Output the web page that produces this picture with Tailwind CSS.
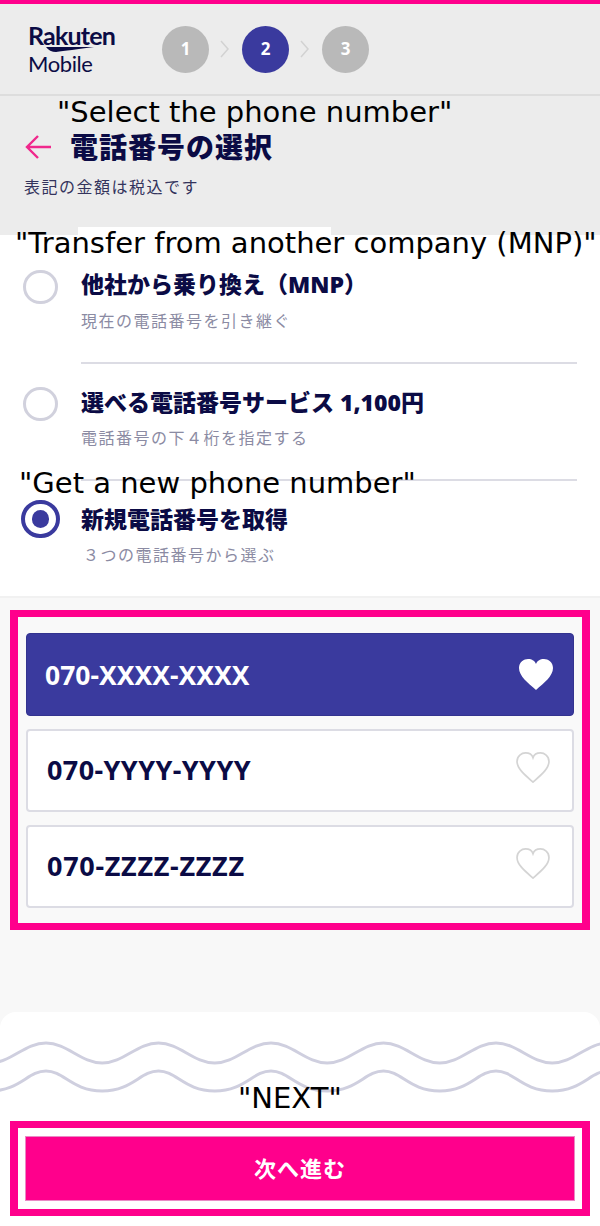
<!DOCTYPE html>
<html lang="ja"><head><meta charset="utf-8"><script src="https://cdn.jsdelivr.net/npm/@tailwindcss/browser@4"></script></head>
<body class="bg-[#f8f8f8]">
<div class="relative w-[600px] h-[1226px] overflow-hidden font-['Noto_Sans','Noto_Sans_CJK_JP',sans-serif] text-[#0b0b45]">
  <div class="h-[4px] bg-[#ff008c]"></div>
  <header class="h-[92px] bg-[#ececec] border-b-2 border-[#dddddd] flex items-center pl-[28px]">
    <div class="w-[134px] flex flex-col">
      <span class="font-['Lato',sans-serif] font-bold text-[25px] leading-[24px] tracking-[-0.8px]">Rakuten</span>
      <svg class="w-[86px] h-[6px]" viewBox="0 0 86 6"><path d="M18 0 H66 C50 2 36 4 28 5 C24 5 20 3 18 0Z" fill="#0b0b45"/></svg>
      <span class="font-['Lato',sans-serif] font-normal text-[22px] leading-[22px] tracking-[-0.4px]">Mobile</span>
    </div>
    <div class="flex items-center">
      <div class="w-[47px] h-[47px] rounded-full bg-[#b9b9b9] text-white font-bold text-[17px] flex items-center justify-center">1</div>
      <svg class="w-[33px] h-[20px]" viewBox="0 0 33 20" fill="none" stroke="#d2d2d2" stroke-width="1.5"><path d="M12 2 L19 10 L12 18"/></svg>
      <div class="w-[47px] h-[47px] rounded-full bg-[#3a3a9e] text-white font-bold text-[17px] flex items-center justify-center">2</div>
      <svg class="w-[33px] h-[20px]" viewBox="0 0 33 20" fill="none" stroke="#d2d2d2" stroke-width="1.5"><path d="M12 2 L19 10 L12 18"/></svg>
      <div class="w-[47px] h-[47px] rounded-full bg-[#b9b9b9] text-white font-bold text-[17px] flex items-center justify-center">3</div>
    </div>
  </header>
  <section class="h-[139px] bg-[#ececec] pl-[24px] pt-[32px]">
    <div class="flex items-center h-[38px]">
      <svg class="w-[28px] h-[26px] shrink-0" viewBox="0 0 28 26" fill="none" stroke="#f0288c" stroke-width="2.4"><path d="M14 2 L3 13 L14 24 M3 13 H27"/></svg>
      <h1 class="ml-[18px] text-[28px] leading-[38px] font-black tracking-[1px]">電話番号の選択</h1>
    </div>
    <p class="mt-[9px] text-[16px] leading-[24px] text-[#33335c] tracking-[1.5px]">表記の金額は税込です</p>
  </section>
  <section class="h-[363px] bg-white pt-[35px] pl-[23px] border-b-2 border-[#f1f1f1]">
    <div class="flex">
      <div class="w-[35px] h-[34px] rounded-full border-[3px] border-[#d1d1dd] bg-white shrink-0"></div>
      <div class="ml-[23px] w-[496px] h-[94px] border-b-2 border-[#dcdce4]">
        <p class="text-[23px] leading-[32px] font-black -mt-[2px]">他社から乗り換え（MNP）</p>
        <p class="mt-[9px] text-[16px] leading-[24px] text-[#8b8ba3] tracking-[1.5px]">現在の電話番号を引き継ぐ</p>
      </div>
    </div>
    <div class="flex mt-[23px]">
      <div class="w-[35px] h-[34px] rounded-full border-[3px] border-[#d1d1dd] bg-white shrink-0"></div>
      <div class="ml-[23px] w-[496px] h-[94px] border-b-2 border-[#dcdce4]">
        <p class="text-[23px] leading-[32px] font-black -mt-[1px]">選べる電話番号サービス 1,100円</p>
        <p class="mt-[8px] text-[16px] leading-[24px] text-[#8b8ba3] tracking-[1.5px]">電話番号の下４桁を指定する</p>
      </div>
    </div>
    <div class="flex mt-[19px] -ml-[2px]">
      <div class="w-[39px] h-[38px] rounded-full border-[4px] border-[#3a3a9e] bg-white shrink-0 flex items-center justify-center">
        <div class="w-[17px] h-[18px] rounded-full bg-[#3a3a9e]"></div>
      </div>
      <div class="ml-[21px] pt-[3px]">
        <p class="text-[23px] leading-[32px] font-black">新規電話番号を取得</p>
        <p class="mt-[8px] pl-[2px] text-[16px] leading-[24px] text-[#8b8ba3] tracking-[1.5px]">３つの電話番号から選ぶ</p>
      </div>
    </div>
  </section>
  <section class="mt-[12px] mx-[10px] h-[320px] border-x-[8px] border-y-[7px] border-[#ff008c] bg-[#f9f9f9] pt-[16px] pl-[8px] pr-[8px] flex flex-col gap-[13px]">
    <div class="h-[83px] rounded-[4px] bg-[#3a3a9e] border border-[#33338f] flex items-center justify-between pl-[18px] pr-[19px] text-white">
      <span class="text-[26.5px] font-bold leading-[32px]">070-XXXX-XXXX</span>
      <svg class="w-[36px] h-[33px]" viewBox="0 0 36 33" fill="#fff"><path d="M18 32 C10 25 1 18 1 10 C1 4 6 1 10 1 C14 1 17 3 18 6 C19 3 22 1 26 1 C30 1 35 4 35 10 C35 18 26 25 18 32Z"/></svg>
    </div>
    <div class="h-[83px] rounded-[4px] bg-white border-2 border-[#dcdce4] flex items-center justify-between pl-[19px] pr-[22px] pb-[2px]">
      <span class="text-[27px] font-bold leading-[32px] tracking-[0.4px]">070-YYYY-YYYY</span>
      <svg class="w-[34px] h-[31px] -mt-[5px]" viewBox="0 0 36 33" fill="none" stroke="#d4d4d4" stroke-width="1.8"><path d="M18 32 C10 25 1 18 1 10 C1 4 6 1 10 1 C14 1 17 3 18 6 C19 3 22 1 26 1 C30 1 35 4 35 10 C35 18 26 25 18 32Z"/></svg>
    </div>
    <div class="h-[83px] rounded-[4px] bg-white border-2 border-[#dcdce4] flex items-center justify-between pl-[19px] pr-[22px] pb-[2px]">
      <span class="text-[27px] font-bold leading-[32px] tracking-[0.7px]">070-ZZZZ-ZZZZ</span>
      <svg class="w-[34px] h-[31px] -mt-[5px]" viewBox="0 0 36 33" fill="none" stroke="#d4d4d4" stroke-width="1.8"><path d="M18 32 C10 25 1 18 1 10 C1 4 6 1 10 1 C14 1 17 3 18 6 C19 3 22 1 26 1 C30 1 35 4 35 10 C35 18 26 25 18 32Z"/></svg>
    </div>
  </section>
  <footer class="mt-[82px] h-[214px] bg-white rounded-t-[16px] flex flex-col">
    <svg class="mt-[28px] w-[600px] h-[56px] shrink-0" viewBox="0 0 600 56" fill="none" stroke="#cfcfdf" stroke-width="3">
      <path d="M-10.25 23 c21 0 35 -20 56.25 -20 c21 0 35 20 56.25 20 c21 0 35 -20 56.25 -20 c21 0 35 20 56.25 20 c21 0 35 -20 56.25 -20 c21 0 35 20 56.25 20 c21 0 35 -20 56.25 -20 c21 0 35 20 56.25 20 c21 0 35 -20 56.25 -20 c21 0 35 20 56.25 20 c21 0 35 -20 56.25 -20"/>
      <path d="M-10.25 51 c30 0 38 -20 56.25 -20 c18 0 26 20 56.25 20 c30 0 38 -20 56.25 -20 c18 0 26 20 56.25 20 c30 0 38 -20 56.25 -20 c18 0 26 20 56.25 20 c30 0 38 -20 56.25 -20 c18 0 26 20 56.25 20 c30 0 38 -20 56.25 -20 c18 0 26 20 56.25 20 c30 0 38 -20 56.25 -20"/>
    </svg>
    <div class="mt-[25px] mx-[10px] h-[95px] border-x-[8px] border-y-[7px] border-[#ff008c] bg-white p-[8px] pl-[7px] pr-[7px]">
      <button class="w-full h-full bg-[#ff008c] border border-[#e98ac4] text-white font-bold text-[22px] tracking-[1px]">次へ進む</button>
    </div>
  </footer>
  <div class="absolute left-[78px] top-[227px] w-[253px] h-[8px] bg-white"></div>
  <span class="absolute left-[57px] top-[91px] font-['DejaVu_Sans',sans-serif] text-[29px] leading-[42px] whitespace-nowrap text-black">"Select the phone number"</span>
  <span class="absolute left-[15px] top-[222px] font-['DejaVu_Sans',sans-serif] text-[29px] leading-[42px] whitespace-nowrap text-black">"Transfer from another company (MNP)"</span>
  <span class="absolute left-[19px] top-[462px] font-['DejaVu_Sans',sans-serif] text-[29px] leading-[42px] whitespace-nowrap text-black">"Get a new phone number"</span>
  <span class="absolute left-[238px] top-[1077px] font-['DejaVu_Sans',sans-serif] text-[29px] leading-[42px] whitespace-nowrap text-black">"NEXT"</span>
</div>
</body></html>
